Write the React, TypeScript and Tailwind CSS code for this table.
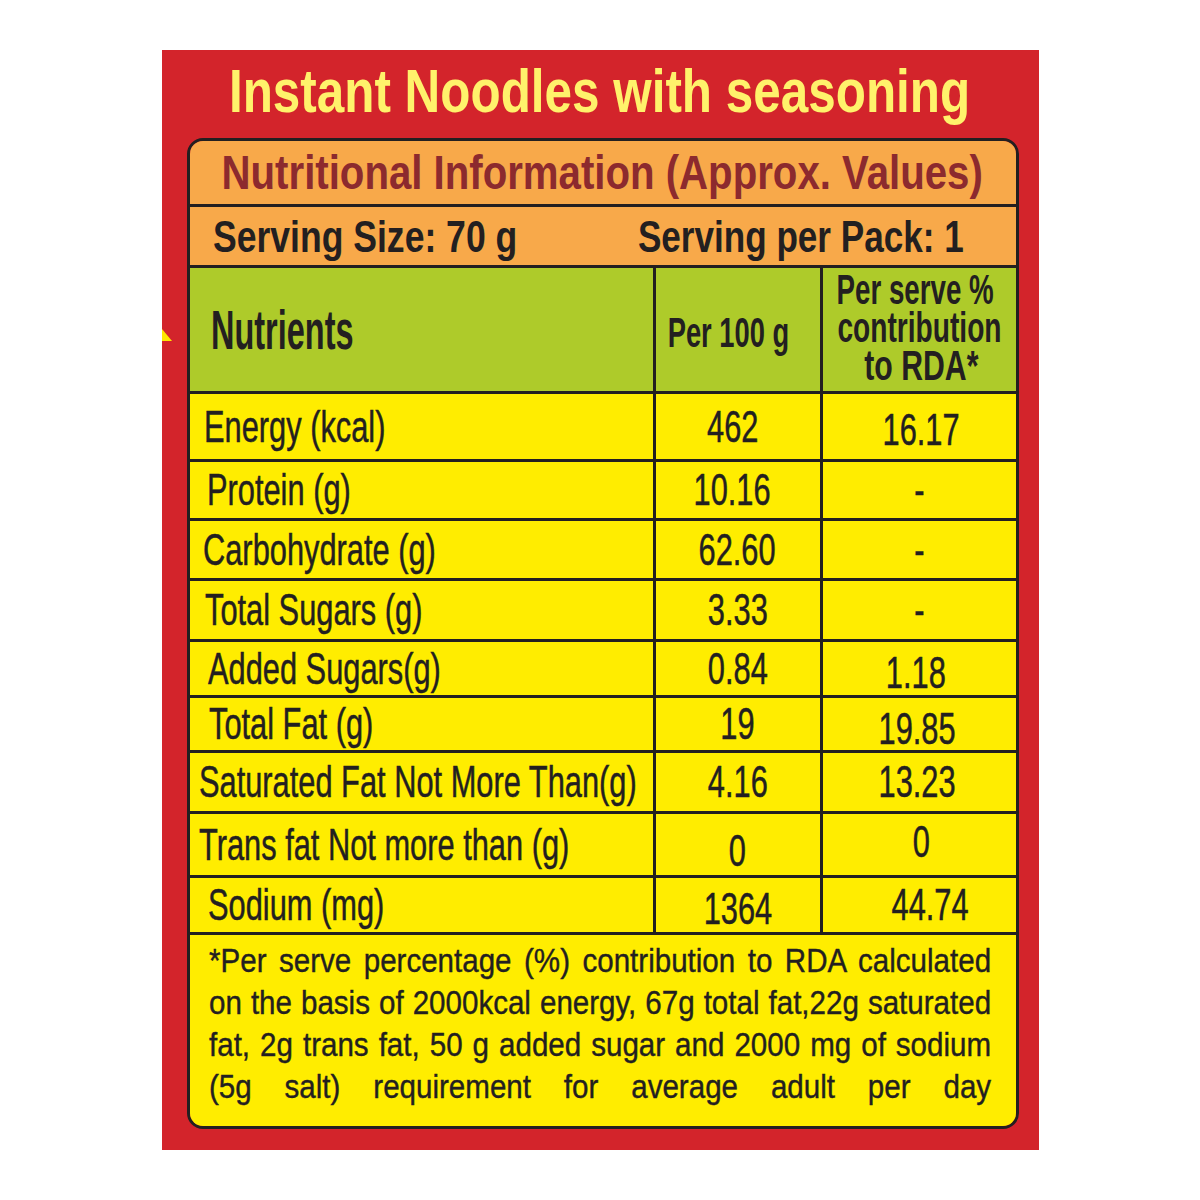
import React from 'react';

type Row = {
  label: string;
  per: string;
  rda: string;
  h: string;
  pl: string;
  perCls?: string;
  rdaCls?: string;
};

const rows: Row[] = [
  { label: 'Energy (kcal)', per: '462', rda: '16.17', h: 'h-[68px]', pl: 'pl-[14px]', perCls: '-translate-x-[5px]', rdaCls: 'translate-x-[2px] translate-y-[3px]' },
  { label: 'Protein (g)', per: '10.16', rda: '-', h: 'h-[59px]', pl: 'pl-[17px]', perCls: '-translate-x-[5px]' },
  { label: 'Carbohydrate (g)', per: '62.60', rda: '-', h: 'h-[60px]', pl: 'pl-[13px]' },
  { label: 'Total Sugars (g)', per: '3.33', rda: '-', h: 'h-[61px]', pl: 'pl-[15px]' },
  { label: 'Added Sugars(g)', per: '0.84', rda: '1.18', h: 'h-[56px]', pl: 'pl-[18px]', rdaCls: '-translate-x-[3px] translate-y-[4px]' },
  { label: 'Total Fat (g)', per: '19', rda: '19.85', h: 'h-[55px]', pl: 'pl-[19px]', rdaCls: '-translate-x-[2px] translate-y-[5px]' },
  { label: 'Saturated Fat Not More Than(g)', per: '4.16', rda: '13.23', h: 'h-[61px]', pl: 'pl-[9px]', rdaCls: '-translate-x-[2px]' },
  { label: 'Trans fat Not more than (g)', per: '0', rda: '0', h: 'h-[64px]', pl: 'pl-[9px]', perCls: 'translate-y-[6px]', rdaCls: 'translate-x-[2px] -translate-y-[3px]' },
  { label: 'Sodium (mg)', per: '1364', rda: '44.74', h: 'h-[57px]', pl: 'pl-[18px]', perCls: 'translate-y-[4px]', rdaCls: 'translate-x-[11px]' },
];

export default function App() {
  return (
    <div className="min-h-[1200px] bg-white pt-[50px] font-['Liberation_Sans',Arial,sans-serif] text-[#231f20]">
      <div className="relative mx-auto h-[1100px] w-[877px] bg-[#d3242b]">
        {/* little yellow corner poking in from behind */}
        <svg className="absolute left-0 top-[278px]" width="10" height="14" viewBox="0 0 10 14">
          <polygon points="0,1 10,13 0,13" fill="#ffe600" />
        </svg>

        <div className="flex h-[88px] justify-center pt-[11px]">
          <span className="inline-block shrink-0 scale-x-[0.81] whitespace-nowrap text-[61px] font-bold leading-none text-[#fff26b]">
            Instant Noodles with seasoning
          </span>
        </div>

        <div className="ml-[25px] flex h-[991px] w-[832px] flex-col overflow-hidden rounded-[16px] border-[3px] border-[#231f20]">
          <div className="flex h-[66px] shrink-0 items-center justify-center border-b-[3px] border-[#231f20] bg-[#f8a94a]">
            <span className="inline-block shrink-0 scale-x-[0.82] whitespace-nowrap text-[49px] font-bold leading-none text-[#8c2a2e]">
              Nutritional Information (Approx. Values)
            </span>
          </div>

          <div className="flex h-[61px] shrink-0 items-center border-b-[3px] border-[#231f20] bg-[#f8a94a]">
            <div className="w-[420px] shrink-0 pl-[23px]">
              <span className="inline-block origin-left scale-x-[0.79] whitespace-nowrap text-[45px] font-bold leading-none">
                Serving Size: 70 g
              </span>
            </div>
            <div className="flex min-w-0 flex-1 justify-end pr-[52px]">
              <span className="inline-block shrink-0 origin-right scale-x-[0.78] whitespace-nowrap text-[45px] font-bold leading-none">
                Serving per Pack: 1
              </span>
            </div>
          </div>

          <div className="flex h-[126px] shrink-0 border-b-[3px] border-[#231f20] bg-[#aecb2a]">
            <div className="flex w-[466px] shrink-0 items-center border-r-[3px] border-[#231f20] pl-[21px]">
              <span className="inline-block origin-left scale-x-[0.58] whitespace-nowrap text-[56px] font-bold leading-none">
                Nutrients
              </span>
            </div>
            <div className="flex w-[167px] shrink-0 items-center justify-center border-r-[3px] border-[#231f20]">
              <span className="inline-block shrink-0 -translate-x-[9px] translate-y-[3px] scale-x-[0.65] whitespace-nowrap text-[42px] font-bold leading-none">
                Per 100 g
              </span>
            </div>
            <div className="flex min-w-0 flex-1 items-center justify-center">
              <div className="flex shrink-0 -translate-y-[2px] flex-col items-center text-[42px] font-bold leading-[38px]">
                <span className="inline-block -translate-x-[4px] scale-x-[0.66] whitespace-nowrap">Per serve %</span>
                <span className="inline-block scale-x-[0.67] whitespace-nowrap">contribution</span>
                <span className="inline-block translate-x-[2px] scale-x-[0.72] whitespace-nowrap">to RDA*</span>
              </div>
            </div>
          </div>

          {rows.map((r) => (
            <div key={r.label} className={`flex shrink-0 border-b-[3px] border-[#231f20] bg-[#ffed00] ${r.h}`}>
              <div className={`flex w-[466px] shrink-0 items-center border-r-[3px] border-[#231f20] ${r.pl}`}>
                <span className="inline-block origin-left scale-x-[0.7] whitespace-nowrap text-[44px] leading-none [-webkit-text-stroke:0.5px_#231f20]">
                  {r.label}
                </span>
              </div>
              <div className="flex w-[167px] shrink-0 items-center justify-center border-r-[3px] border-[#231f20]">
                <span className={`inline-block shrink-0 scale-x-[0.7] whitespace-nowrap text-[44px] leading-none [-webkit-text-stroke:0.5px_#231f20] ${r.perCls ?? ''}`}>
                  {r.per}
                </span>
              </div>
              <div className="flex min-w-0 flex-1 items-center justify-center">
                <span className={`inline-block shrink-0 scale-x-[0.7] whitespace-nowrap text-[44px] leading-none [-webkit-text-stroke:0.5px_#231f20] ${r.rdaCls ?? ''}`}>
                  {r.rda}
                </span>
              </div>
            </div>
          ))}

          <div className="flex-1 bg-[#ffed00] pl-[19px] pt-[4px]">
            <p className="w-[900px] origin-left scale-x-[0.869] whitespace-nowrap text-justify text-[34px] leading-[42px] [-webkit-text-stroke:0.4px_#231f20] [text-align-last:justify]">
              *Per serve percentage (%) contribution to RDA calculated
              <br />
              on the basis of 2000kcal energy, 67g total fat,22g saturated
              <br />
              fat, 2g trans fat, 50 g added sugar and 2000 mg of sodium
              <br />
              (5g salt) requirement for average adult per day
            </p>
          </div>
        </div>
      </div>
    </div>
  );
}
